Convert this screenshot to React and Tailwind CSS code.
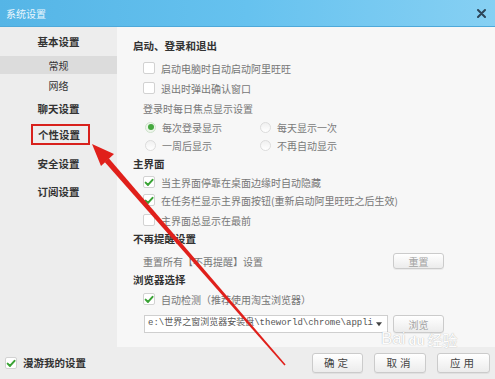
// App.jsx
const FONT = { fontFamily: '"Noto Sans CJK SC", "Noto Sans", sans-serif' };

function Check({ checked }) {
    return (
        <span className="w-[12px] h-[12px] shrink-0 flex items-center justify-center bg-white border border-[#d2d2d2] rounded-[2px]">
            {checked && (
                <svg width="11" height="11" viewBox="0 0 11 11">
                    <path d="M1.8 5.6 L4.4 8.2 L9.4 2.6" fill="none" stroke="#3aa335" strokeWidth="2.2" strokeLinecap="round" strokeLinejoin="round" />
                </svg>
            )}
        </span>
    );
}

function Radio({ on }) {
    return (
        <span
            className={
                "w-[11px] h-[11px] shrink-0 rounded-full flex items-center justify-center border " +
                (on ? "border-[#cfe3cc] bg-[#eef6ec]" : "border-[#dcdcdc] bg-gradient-to-b from-[#f0f0f0] to-white")
            }
        >
            {on && <span className="w-[6px] h-[6px] rounded-full bg-[#45a83f]" />}
        </span>
    );
}

function Btn({ children, dim, className = "" }) {
    return (
        <div
            className={
                "flex items-center justify-center rounded-[3px] border border-[#cbcbcb] bg-gradient-to-b from-white to-[#ececec] shadow-[0_1px_0_rgba(0,0,0,0.05)] " +
                (dim ? "text-[#a3a3a3] " : "text-[#444] ") +
                className
            }
        >
            {children}
        </div>
    );
}

function Row({ className = "", children }) {
    return <div className={"h-[18px] flex items-center " + className}>{children}</div>;
}

function Heading({ children, className = "" }) {
    return (
        <Row className={className}>
            <span className="text-[10.5px] font-bold text-[#333]">{children}</span>
        </Row>
    );
}

function CheckRow({ checked, children, className = "" }) {
    return (
        <Row className={"pl-[10px] gap-[6px] " + className}>
            <Check checked={checked} />
            <span className="text-[10px] text-[#767676] whitespace-nowrap">{children}</span>
        </Row>
    );
}

function RadioCell({ on, children, w }) {
    return (
        <div className={"flex items-center gap-[6px] " + w}>
            <Radio on={on} />
            <span className="text-[10px] text-[#7a7a7a]">{children}</span>
        </div>
    );
}

export default function App() {
    return (
        <div className="relative w-[495px] h-[379px] overflow-hidden bg-[#ededed]" style={FONT}>
            {/* title bar */}
            <div className="h-[27px] flex items-center justify-between pl-[6px] pr-[9px] bg-gradient-to-r from-[#55b5e6] via-[#66c2ef] to-[#86d0f3] border-b border-[#4ea9da]">
                <span className="text-[10px] text-[#eaf6fd]">系统设置</span>
                <svg width="9" height="9" viewBox="0 0 9 9">
                    <path d="M1 1 L8 8 M8 1 L1 8" stroke="#2c4558" strokeWidth="2" strokeLinecap="round" />
                </svg>
            </div>

            <div className="flex h-[320px]">
                {/* sidebar */}
                <div className="w-[117px] shrink-0 flex flex-col items-center text-[#333]">
                    <div className="mt-[5px] h-[20px] flex items-center text-[10.5px] font-bold">基本设置</div>
                    <div className="mt-[4px] w-full h-[18px] flex items-center justify-center bg-[#dcdcdc] text-[10px]">常规</div>
                    <div className="w-full h-[22px] flex items-center justify-center text-[10px]">网络</div>
                    <div className="h-[26px] flex items-center text-[10.5px] font-bold">聊天设置</div>
                    <div className="mt-[2px] w-[59px] h-[21px] ml-[4px] flex items-center pl-[5px] border-2 border-[#d8211c] text-[10.5px] font-bold">
                        个性设置
                    </div>
                    <div className="mt-[7px] h-[24px] flex items-center text-[10.5px] font-bold">安全设置</div>
                    <div className="mt-[4px] h-[24px] flex items-center text-[10.5px] font-bold">订阅设置</div>
                </div>

                {/* content */}
                <div className="flex-1 bg-[#f7f7f7] pl-[16px] pt-[10px]">
                    <Heading>启动、登录和退出</Heading>
                    <CheckRow className="mt-[4px]">启动电脑时自动启动阿里旺旺</CheckRow>
                    <CheckRow className="mt-[2px]">退出时弹出确认窗口</CheckRow>
                    <Row className="mt-[2px] pl-[10px]">
                        <span className="text-[10px] text-[#777]">登录时每日焦点显示设置</span>
                    </Row>
                    <Row className="mt-[1px] pl-[12px]">
                        <RadioCell on w="w-[115px]">每次登录显示</RadioCell>
                        <RadioCell>每天显示一次</RadioCell>
                    </Row>
                    <Row className="pl-[12px]">
                        <RadioCell w="w-[115px]">一周后显示</RadioCell>
                        <RadioCell>不再自动显示</RadioCell>
                    </Row>
                    <Heading className="mt-[1px]">主界面</Heading>
                    <CheckRow checked>当主界面停靠在桌面边缘时自动隐藏</CheckRow>
                    <CheckRow checked>在任务栏显示主界面按钮(重新启动阿里旺旺之后生效)</CheckRow>
                    <CheckRow className="mt-[2px]">主界面总显示在最前</CheckRow>
                    <Heading className="mt-[1px]">不再提醒设置</Heading>
                    <div className="mt-[5px] pl-[10px] w-[311px] flex items-center justify-between">
                        <span className="text-[10px] text-[#777]">重置所有【不再提醒】设置</span>
                        <Btn dim className="w-[51px] h-[16px] text-[10px]">重置</Btn>
                    </div>
                    <Heading className="mt-[2px]">浏览器选择</Heading>
                    <CheckRow checked className="mt-[1px]">自动检测（推荐使用淘宝浏览器）</CheckRow>
                    <div className="mt-[7px] pl-[11px] flex items-center gap-[5px]">
                        <div className="w-[244px] h-[18px] flex items-center bg-white border border-[#cfcfcf] pl-[3px] pr-[5px]">
                            <span
                                className="flex-1 whitespace-nowrap text-[9px] text-[#555]"
                                style={{ fontFamily: '"Liberation Mono", "Noto Sans CJK SC", monospace' }}
                            >
                                e:\世界之窗浏览器安装盘\theworld\chrome\appli
                            </span>
                            <svg width="7" height="5" viewBox="0 0 7 5" className="ml-[3px]">
                                <path d="M0 0 H7 L3.5 4.5 Z" fill="#444" />
                            </svg>
                        </div>
                        <Btn dim className="w-[51px] h-[18px] text-[10px]">浏览</Btn>
                    </div>
                </div>
            </div>

            {/* bottom bar */}
            <div className="h-[32px] flex items-center pl-[5px] pr-[5px]">
                <Check checked />
                <span className="ml-[6px] text-[10.5px] font-bold text-[#333]">漫游我的设置</span>
                <div className="ml-auto flex items-center gap-[11px]">
                    <Btn className="w-[51px] h-[20px] text-[10.5px] tracking-[3px]">确定</Btn>
                    <Btn className="w-[52px] h-[20px] text-[10.5px] tracking-[3px]">取消</Btn>
                    <Btn className="w-[53px] h-[20px] text-[10.5px] tracking-[3px]">应用</Btn>
                </div>
            </div>

            {/* baidu watermark */}
            <div className="absolute left-[381px] top-[330px] flex items-end gap-[3px] text-white opacity-85 pointer-events-none [text-shadow:0_0_1px_rgba(0,0,0,0.4)]">
                <span className="text-[17px] leading-none" style={{ fontFamily: '"Liberation Sans", sans-serif' }}>Bai</span>
                <span className="text-[13px] leading-none font-bold" style={{ fontFamily: '"Liberation Sans", sans-serif' }}>du</span>
                <span className="text-[15px] leading-none">经验</span>
            </div>

            {/* red arrow */}
            <svg className="absolute inset-0 pointer-events-none" width="495" height="379" viewBox="0 0 495 379">
                <polygon points="108.8,158.3 285.6,364.5 284.4,365.5 104.7,162.1" fill="#e0201b" />
                <polygon points="92,144 114,154 101,166" fill="#e0201b" />
            </svg>
        </div>
    );
}
